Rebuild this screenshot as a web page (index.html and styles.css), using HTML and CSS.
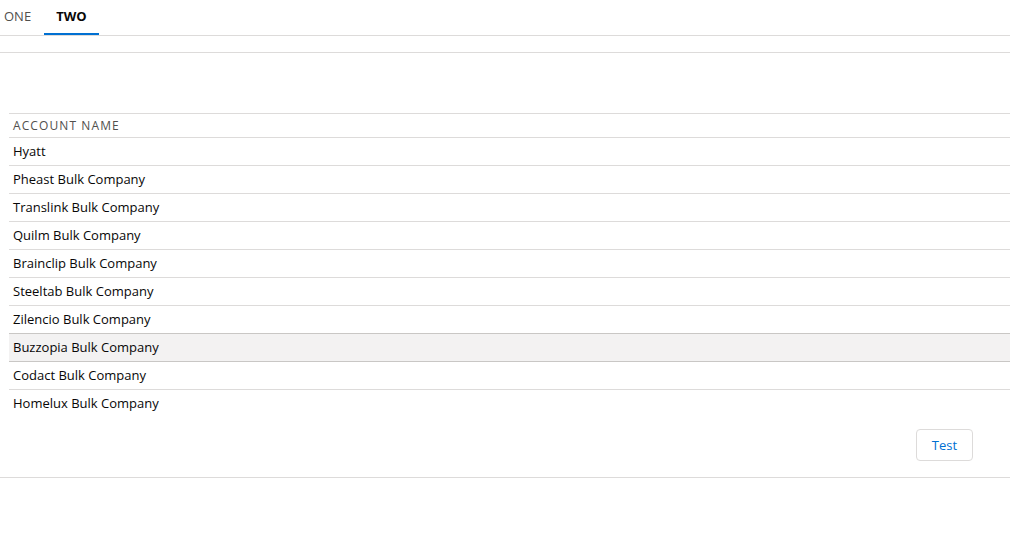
FILE: index.html
```html
<!DOCTYPE html>
<html>
<head>
<meta charset="utf-8">
<link rel="stylesheet" href="styles.css">
</head>
<body>
<div class="tabs">
  <div class="tab tab-first">ONE</div>
  <div class="tab tab-active">TWO</div>
</div>
<div class="panel">
  <div class="card">
    <div class="table">
      <div class="thead">Account Name</div>
      <div class="row">Hyatt</div>
      <div class="row">Pheast Bulk Company</div>
      <div class="row">Translink Bulk Company</div>
      <div class="row">Quilm Bulk Company</div>
      <div class="row">Brainclip Bulk Company</div>
      <div class="row">Steeltab Bulk Company</div>
      <div class="row row-before-hover">Zilencio Bulk Company</div>
      <div class="row row-hover">Buzzopia Bulk Company</div>
      <div class="row">Codact Bulk Company</div>
      <div class="row row-last">Homelux Bulk Company</div>
    </div>
    <div class="actions">
      <button class="btn">Test</button>
    </div>
  </div>
</div>
</body>
</html>
```
FILE: styles.css
```css
* { box-sizing: border-box; }
body {
  margin: 0;
  font-family: "Open Sans", "Liberation Sans", sans-serif;
  font-size: 13px;
  color: #16325c;
  background: #fff;
}
.tabs {
  display: flex;
  height: 36px;
  border-bottom: 1px solid #dddbda;
}
.tab {
  padding: 0 12px;
  line-height: 33px;
  font-size: 13px;
  color: #514f4d;
  text-transform: uppercase;
  border-bottom: 2px solid transparent;
}
.tab-first { padding-left: 4px; padding-right: 13px; }
.tab-active {
  color: #080707;
  font-weight: 700;
  border-bottom-color: #0070d2;
}
.panel {
  padding-top: 16px;
}
.card {
  border-top: 1px solid #dddbda;
  box-shadow: 0 2px 2px rgba(0,0,0,0.08);
  border-bottom: 1px solid #dddbda;
  padding: 60px 0 16px 9px;
}
.table {
  border-top: 1px solid #dddbda;
}
.thead {
  height: 24px;
  line-height: 23px;
  padding-left: 4px;
  font-size: 12px;
  letter-spacing: 1.1px;
  text-transform: uppercase;
  color: #514f4d;
  border-bottom: 1px solid #dddbda;
}
.row {
  height: 28px;
  line-height: 27px;
  padding-left: 4px;
  color: #080707;
  border-bottom: 1px solid #dddbda;
}
.row-before-hover { border-bottom-color: #c9c7c5; }
.row-hover {
  background: #f3f2f2;
  border-bottom-color: #c9c7c5;
}
.row-last { border-bottom: none; }
.actions {
  display: flex;
  justify-content: flex-end;
  padding: 11px 37px 0 0;
}
.btn {
  font-family: inherit;
  font-size: 13px;
  color: #0070d2;
  background: #fff;
  border: 1px solid #dddbda;
  border-radius: 4px;
  width: 57px;
  height: 32px;
  padding: 0;
}
```
